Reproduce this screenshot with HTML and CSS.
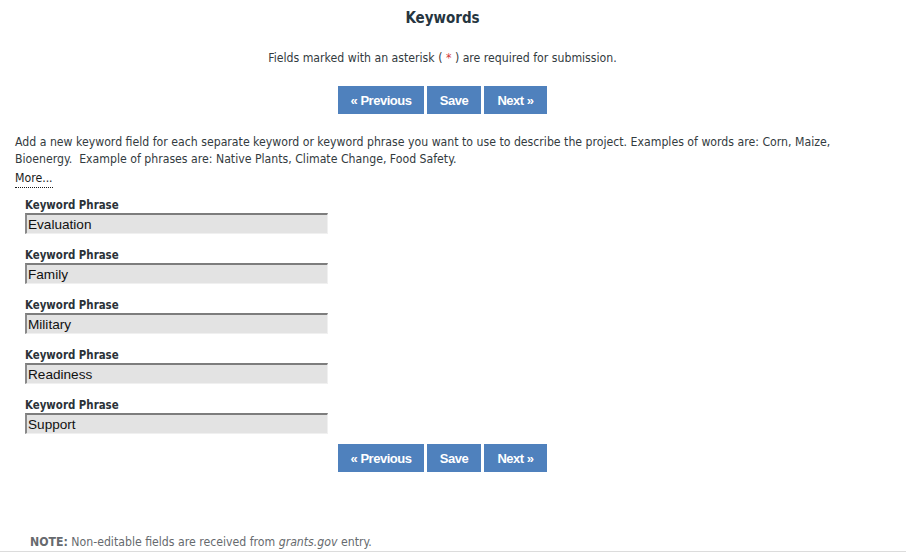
FILE: index.html
```html
<!DOCTYPE html>
<html>
<head>
<meta charset="utf-8">
<title>Keywords</title>
<link rel="stylesheet" href="styles.css">
</head>
<body>
<div class="page">
  <h1 class="title">Keywords</h1>
  <p class="required">Fields marked with an asterisk ( <span class="star">*</span> ) are required for submission.</p>
  <div class="nav">
    <button class="btn btn-prev">« Previous</button>
    <button class="btn btn-save">Save</button>
    <button class="btn btn-next">Next »</button>
  </div>
  <p class="intro">Add a new keyword field for each separate keyword or keyword phrase you want to use to describe the project. Examples of words are: Corn, Maize, Bioenergy.&nbsp; Example of phrases are: Native Plants, Climate Change, Food Safety.</p>
  <a class="more">More...</a>
  <div class="fields">
    <div class="field"><label class="label">Keyword Phrase</label><div class="input">Evaluation</div></div>
    <div class="field"><label class="label">Keyword Phrase</label><div class="input">Family</div></div>
    <div class="field"><label class="label">Keyword Phrase</label><div class="input">Military</div></div>
    <div class="field"><label class="label">Keyword Phrase</label><div class="input">Readiness</div></div>
    <div class="field"><label class="label">Keyword Phrase</label><div class="input">Support</div></div>
  </div>
  <div class="nav nav-bottom">
    <button class="btn btn-prev">« Previous</button>
    <button class="btn btn-save">Save</button>
    <button class="btn btn-next">Next »</button>
  </div>
  <div class="footer"><span class="note"><b>NOTE:</b> Non-editable fields are received from <i>grants.gov</i> entry.</span></div>
</div>
</body>
</html>
```
FILE: styles.css
```css
html, body {
  margin: 0;
  padding: 0;
  background: #ffffff;
}
body {
  font-family: "DejaVu Sans Condensed", "DejaVu Sans", sans-serif;
  font-size: 12.2px;
  color: #333b40;
}
.page {
  display: flex;
  flex-direction: column;
}
.title {
  margin: 9px 21px 0 0;
  text-align: center;
  font-size: 15px;
  font-weight: bold;
  line-height: 18px;
  color: #263540;
}
.required {
  margin: 23px 21px 0 0;
  text-align: center;
  line-height: 16px;
  color: #333b40;
}
.star { color: #d23a3a; }
.nav {
  display: flex;
  justify-content: center;
  gap: 3px;
  margin-top: 20px;
  padding-right: 21px;
}
.btn {
  height: 28px;
  border: none;
  background: #4f81bd;
  color: #ffffff;
  font-family: "Liberation Sans", Arial, sans-serif;
  font-weight: bold;
  font-size: 13px;
  letter-spacing: -0.5px;
  padding: 0;
  cursor: pointer;
}
.btn-prev { width: 86px; }
.btn-save { width: 54px; }
.btn-next { width: 63px; }
.intro {
  margin: 20px 0 0 15px;
  width: 850px;
  line-height: 17px;
}
.more {
  align-self: flex-start;
  margin: 2px 0 0 15px;
  line-height: 17px;
  color: #1a1a1a;
  border-bottom: 1px dotted #1a1a1a;
  cursor: pointer;
}
.fields {
  display: flex;
  flex-direction: column;
  gap: 13px;
  margin: 9px 0 0 25px;
}
.field {
  display: flex;
  flex-direction: column;
}
.label {
  font-weight: bold;
  font-size: 11.4px;
  line-height: 16px;
  color: #2b3238;
}
.input {
  width: 299px;
  height: 18px;
  box-sizing: content-box;
  background: #e3e3e3;
  border-top: 2px solid #7d7d7d;
  border-left: 2px solid #8a8a8a;
  border-right: 1px solid #f0f0f0;
  border-bottom: 1px solid #f0f0f0;
  padding: 0 0 0 1px;
  font-family: "Liberation Sans", Arial, sans-serif;
  font-size: 13.6px;
  line-height: 19px;
  color: #111;
}
.nav-bottom { margin-top: 10px; }
.footer {
  margin-top: 63px;
  border-bottom: 1px solid #dcdcdc;
  padding: 0 0 1px 30px;
}
.note {
  color: #666a6e;
  line-height: 15px;
}
```
